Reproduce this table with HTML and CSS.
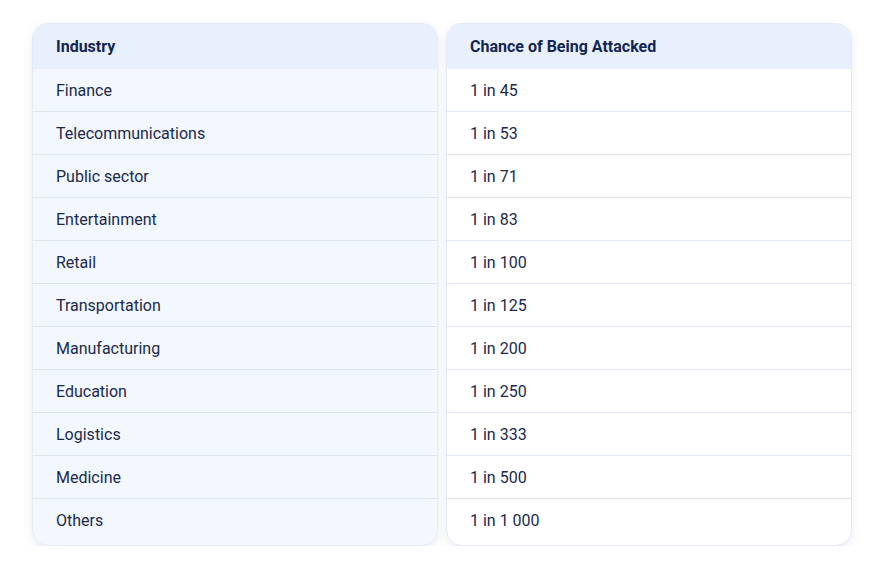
FILE: index.html
```html
<!DOCTYPE html>
<html>
<head>
<meta charset="utf-8">
<link rel="stylesheet" href="styles.css">
</head>
<body>
<div class="wrap">
  <div class="card card-left">
    <div class="head">Industry</div>
    <div class="row">Finance</div>
    <div class="row">Telecommunications</div>
    <div class="row">Public sector</div>
    <div class="row">Entertainment</div>
    <div class="row">Retail</div>
    <div class="row">Transportation</div>
    <div class="row">Manufacturing</div>
    <div class="row">Education</div>
    <div class="row">Logistics</div>
    <div class="row">Medicine</div>
    <div class="row last">Others</div>
  </div>
  <div class="card card-right">
    <div class="head">Chance of Being Attacked</div>
    <div class="row">1 in 45</div>
    <div class="row">1 in 53</div>
    <div class="row">1 in 71</div>
    <div class="row">1 in 83</div>
    <div class="row">1 in 100</div>
    <div class="row">1 in 125</div>
    <div class="row">1 in 200</div>
    <div class="row">1 in 250</div>
    <div class="row">1 in 333</div>
    <div class="row">1 in 500</div>
    <div class="row last">1 in 1 000</div>
  </div>
</div>
</body>
</html>
```

FILE: styles.css
```css
html, body {
  margin: 0;
  padding: 0;
  background: #ffffff;
}
body {
  font-family: Roboto, "Liberation Sans", sans-serif;
  color: #1b2a4a;
}
.wrap {
  display: flex;
  gap: 8px;
  padding: 23px 32px 0 32px;
}
.card {
  flex: 1;
  border-radius: 16px;
  overflow: hidden;
  border: 1px solid #e4ebf6;
  box-shadow: 0 3px 10px rgba(40, 70, 130, 0.10);
  display: flex;
  flex-direction: column;
  padding-bottom: 4px;
}
.card-left {
  background: #f3f7fe;
}
.card-right {
  background: #ffffff;
}
.head {
  background: #e8f0fd;
  height: 45px;
  display: flex;
  align-items: center;
  padding-left: 23px;
  font-size: 16px;
  font-weight: 700;
  color: #13264f;
}
.row {
  height: 42px;
  border-bottom: 1px solid #dfe6f1;
  display: flex;
  align-items: center;
  padding-left: 23px;
  font-size: 16px;
}
.row.last {
  border-bottom: none;
}
```
